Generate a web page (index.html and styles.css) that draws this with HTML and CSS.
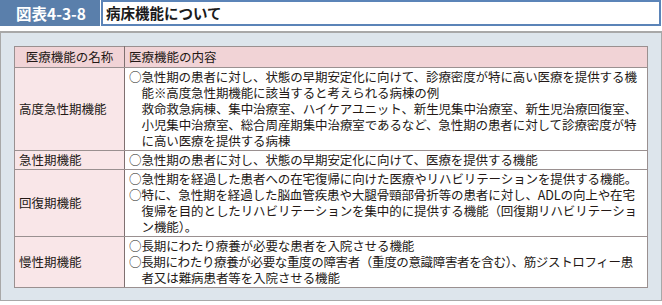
FILE: index.html
```html
<!DOCTYPE html>
<html lang="ja">
<head>
<meta charset="utf-8">
<link rel="stylesheet" href="styles.css">
</head>
<body>
<div class="titlebar">
  <div class="label">図表4-3-8</div>
  <div class="title">病床機能について</div>
</div>
<div class="panel">
  <table class="tbl">
    <colgroup><col class="col1"><col class="col2"></colgroup>
    <thead>
      <tr><th class="c1">医療機能の名称</th><th class="c2">医療機能の内容</th></tr>
    </thead>
    <tbody>
      <tr>
        <td class="c1">高度急性期機能</td>
        <td class="c2"><div class="item">○急性期の患者に対し、状態の早期安定化に向けて、診療密度が特に高い医療を提供する機<br>能※高度急性期機能に該当すると考えられる病棟の例<br>救命救急病棟、集中治療室、ハイケアユニット、新生児集中治療室、新生児治療回復室、<br>小児集中治療室、総合周産期集中治療室であるなど、急性期の患者に対して診療密度が特<br>に高い医療を提供する病棟</div></td>
      </tr>
      <tr>
        <td class="c1">急性期機能</td>
        <td class="c2"><div class="item">○急性期の患者に対し、状態の早期安定化に向けて、医療を提供する機能</div></td>
      </tr>
      <tr>
        <td class="c1">回復期機能</td>
        <td class="c2"><div class="item">○急性期を経過した患者への在宅復帰に向けた医療やリハビリテーションを提供する機能。</div><div class="item">○特に、急性期を経過した脳血管疾患や大腿骨頸部骨折等の患者に対し、ADLの向上や在宅<br>復帰を目的としたリハビリテーションを集中的に提供する機能（回復期リハビリテーショ<br>ン機能）。</div></td>
      </tr>
      <tr>
        <td class="c1">慢性期機能</td>
        <td class="c2"><div class="item">○長期にわたり療養が必要な患者を入院させる機能</div><div class="item"><span class="tight">○長期にわたり療養が必要な重度の障害者（重度の意識障害者を含む）、筋ジストロフィー患</span><br>者又は難病患者等を入院させる機能</div></td>
      </tr>
    </tbody>
  </table>
</div>
</body>
</html>
```
FILE: styles.css
```css
html, body {
  margin: 0;
  padding: 0;
  background: #ffffff;
}
body {
  width: 662px;
  height: 305px;
  font-family: "Noto Sans CJK JP", "Noto Sans", sans-serif;
  color: #231815;
}
.titlebar {
  display: flex;
  height: 26px;
}
.label {
  width: 100px;
  background: #5a7fab;
  color: #ffffff;
  font-weight: bold;
  font-size: 15.5px;
  line-height: 26px;
  padding-left: 16px;
  box-sizing: border-box;
  white-space: nowrap;
}
.title {
  flex: 1;
  margin-left: 1px;
  margin-right: 1px;
  border: 2px solid #5b84b8;
  background: #ffffff;
  font-weight: bold;
  font-size: 14.5px;
  line-height: 22px;
  padding-left: 3px;
  color: #1a1a1a;
}
.panel {
  margin-top: 5px;
  width: 662px;
  height: 270px;
  box-sizing: border-box;
  background: #dde5ec;
  border: 1px solid #a8a8a8;
  border-top-width: 2px;
  padding: 13px 13px 0 13px;
}
.tbl {
  border-collapse: collapse;
  table-layout: fixed;
  width: 634px;
  font-size: 12.5px;
  line-height: 16px;
  border: 1px solid #7f7070;
}
.col1 {
  width: 110px;
}
.tbl th, .tbl td {
  border: 1px solid #9a9090;
  vertical-align: middle;
  font-weight: normal;
  text-align: left;
}
.tbl th {
  background: #f1d3d6;
  padding: 2px 4px;
}
.tbl th.c1 {
  text-align: center;
}
.tbl th.c1, .tbl td.c1 {
  border-right: 1px solid #7f7070;
}
.tbl td {
  padding: 1px 4px;
}
.tbl td.c1 {
  background: #f9e6e8;
}
.tbl td.c2 {
  background: #ffffff;
}
.item {
  padding-left: 1em;
  text-indent: -1em;
  white-space: nowrap;
  letter-spacing: -0.1px;
}
.tight {
  letter-spacing: -0.35px;
}
```
